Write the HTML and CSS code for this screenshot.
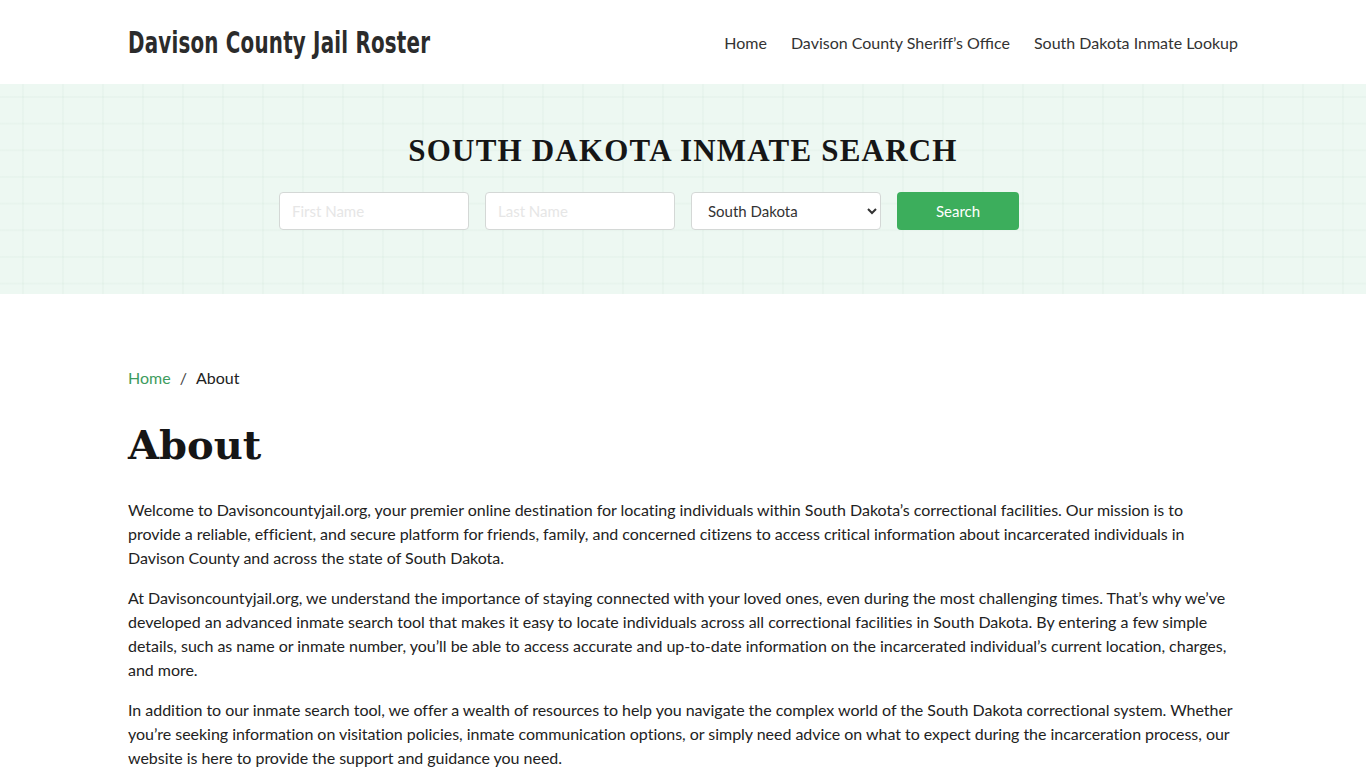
FILE: index.html
```html
<!DOCTYPE html>
<html lang="en">
<head>
<meta charset="utf-8">
<title>About - Davison County Jail Roster</title>
<link rel="stylesheet" href="styles.css">
</head>
<body>
<header class="site-header">
  <div class="container header-inner">
    <a class="brand" href="#"><span class="brand-text">Davison County Jail Roster</span></a>
    <nav class="main-nav">
      <a href="#">Home</a>
      <a href="#">Davison County Sheriff’s Office</a>
      <a href="#">South Dakota Inmate Lookup</a>
    </nav>
  </div>
</header>

<section class="hero">
  <h2 class="hero-title">SOUTH DAKOTA INMATE SEARCH</h2>
  <form class="search-form">
    <input type="text" class="field" placeholder="First Name">
    <input type="text" class="field" placeholder="Last Name">
    <select class="field select">
      <option>South Dakota</option>
    </select>
    <button type="button" class="btn-search">Search</button>
  </form>
</section>

<main class="container content">
  <nav class="breadcrumb">
    <a href="#">Home</a>
    <span class="sep">/</span>
    <span class="current">About</span>
  </nav>
  <h1 class="page-title">About</h1>
  <p>Welcome to Davisoncountyjail.org, your premier online destination for locating individuals within South Dakota’s correctional facilities. Our mission is to provide a reliable, efficient, and secure platform for friends, family, and concerned citizens to access critical information about incarcerated individuals in Davison County and across the state of South Dakota.</p>
  <p>At Davisoncountyjail.org, we understand the importance of staying connected with your loved ones, even during the most challenging times. That’s why we’ve developed an advanced inmate search tool that makes it easy to locate individuals across all correctional facilities in South Dakota. By entering a few simple details, such as name or inmate number, you’ll be able to access accurate and up-to-date information on the incarcerated individual’s current location, charges, and more.</p>
  <p>In addition to our inmate search tool, we offer a wealth of resources to help you navigate the complex world of the South Dakota correctional system. Whether you’re seeking information on visitation policies, inmate communication options, or simply need advice on what to expect during the incarceration process, our website is here to provide the support and guidance you need.</p>
</main>
</body>
</html>
```

FILE: styles.css
```css
* {
  box-sizing: border-box;
}

body {
  margin: 0;
  font-family: Lato, "Open Sans", sans-serif;
  font-size: 16px;
  line-height: 24px;
  color: #222;
  background: #fff;
}

a {
  text-decoration: none;
}

.container {
  width: 1110px;
  margin: 0 auto;
}

/* Header */
.site-header {
  height: 84px;
  background: #fff;
}

.header-inner {
  height: 100%;
  display: flex;
  align-items: center;
  justify-content: space-between;
}

.brand {
  display: block;
  width: 302px;
  white-space: nowrap;
  color: #2b2b2b;
}

/* narrow display lettering, squeezed from the condensed face */
.brand-text {
  display: inline-block;
  font-family: "DejaVu Sans Condensed", "DejaVu Sans", sans-serif;
  font-stretch: condensed;
  font-weight: 700;
  font-size: 30px;
  line-height: 36px;
  letter-spacing: 0.3px;
  transform: scaleX(0.735);
  transform-origin: left center;
  padding-top: 2px;
}

.main-nav {
  display: flex;
  gap: 24px;
  padding-top: 2px;
}

.main-nav a {
  font-size: 16px;
  color: #333;
}

/* Search hero */
.hero {
  height: 210px;
  padding-top: 47px;
  background-color: #edf8f2;
  background-image:
    linear-gradient(90deg, rgba(150, 190, 165, 0.06) 2px, transparent 2px),
    linear-gradient(180deg, rgba(150, 190, 165, 0.06) 2px, transparent 2px);
  background-size: 40px 26.67px;
  background-position: 22px 12px;
}

.hero-title {
  margin: 0;
  text-align: center;
  font-family: "Liberation Serif", "Times New Roman", serif;
  font-weight: 700;
  font-size: 31px;
  line-height: 40px;
  letter-spacing: 1.2px;
  color: #161616;
}

.search-form {
  width: 808px;
  margin: 21px auto 0;
  display: grid;
  grid-template-columns: repeat(4, 190px);
  gap: 16px;
}

.field {
  height: 38px;
  padding: 0 12px;
  border: 1px solid #d4d8d6;
  border-radius: 4px;
  background: #fff;
  font-family: Lato, sans-serif;
  font-size: 15px;
  color: #333;
}

.field::placeholder {
  color: #e6e6e6;
}

.select {
  padding: 0 10px 0 12px;
  color: #333;
}

.btn-search {
  width: 122px;
  height: 38px;
  border: none;
  border-radius: 4px;
  background: #3cae5c;
  color: #fff;
  font-family: Lato, sans-serif;
  font-size: 15px;
}

/* Content */
.content {
  padding-top: 72px;
}

.breadcrumb {
  display: flex;
  gap: 8px;
  font-size: 16px;
  line-height: 24px;
  color: #222;
}

.breadcrumb a {
  color: #3d9c5e;
}

.breadcrumb .sep {
  color: #444;
  padding: 0 1px;
}

.page-title {
  margin: 27px 0 25px;
  font-family: "DejaVu Serif", Georgia, serif;
  font-weight: 700;
  font-size: 40px;
  line-height: 56px;
  color: #161616;
}

.content p {
  margin: 0 0 16px;
  letter-spacing: -0.03px;
}
```
